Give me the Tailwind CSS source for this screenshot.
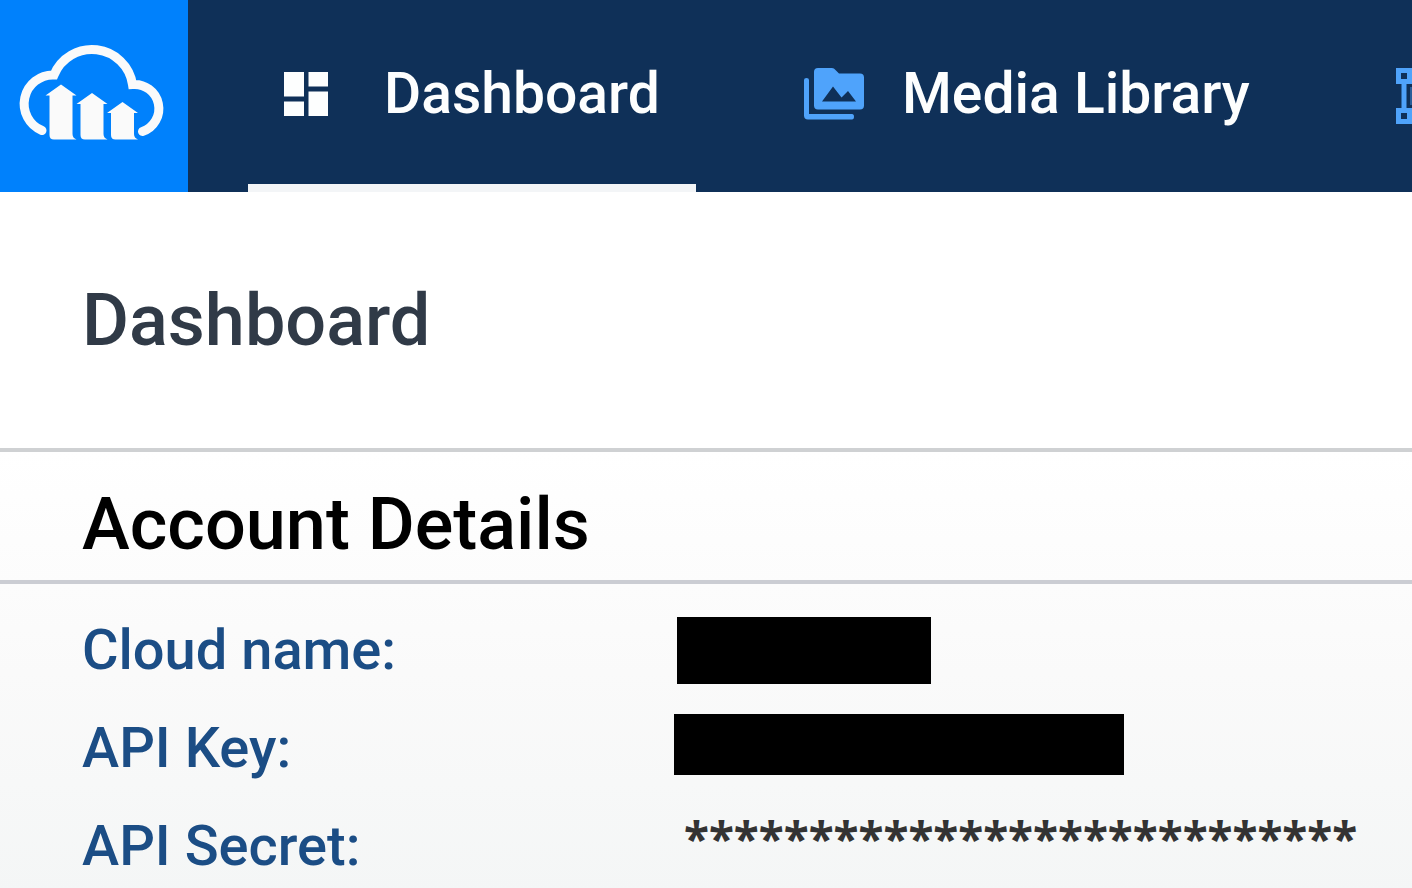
<!DOCTYPE html>
<html lang="en">
<head>
<meta charset="utf-8">
<title>Dashboard</title>
<meta name="viewport" content="width=device-width, initial-scale=1">
<script src="https://cdn.jsdelivr.net/npm/@tailwindcss/browser@4"></script>
</head>
<body class="flex min-h-screen flex-col overflow-x-hidden bg-white font-['Roboto',sans-serif] font-medium">
<header class="flex h-48 overflow-hidden bg-[#0f3058]">
  <a href="#" aria-label="Home" class="block w-[188px] shrink-0 bg-[#0081fc]">
    <svg class="h-48 w-[188px]" viewBox="0 0 188 192" fill="none">
      <path d="M42 130.500A28.850 28.850 0 0 1 54 75A41 41 0 0 1 132.500 84.500A24.200 24.200 0 0 1 142.500 131.500" stroke="#fafafa" stroke-width="9" stroke-linecap="round"/>
      <path d="M132.500 80V88.500" stroke="#fafafa" stroke-width="7"/>
      <g fill="#fafafa">
        <path d="M61 84.500L76.500 95.500H72.500V134Q72.500 138 76.500 139.500H54Q49.500 139.500 49.500 135V95.500H45.500Z"/>
        <path d="M92 93L107.500 104H103.500V134Q103.500 138 107.500 139.500H85Q80.500 139.500 80.500 135V104H76.500Z"/>
        <path d="M122.500 102L138 113H134V134Q134 138 138 139.500H115.500Q111 139.500 111 135V113H107Z"/>
      </g>
    </svg>
  </a>
  <nav class="ml-15 flex shrink-0 gap-18 text-[57px] leading-none text-[#fdfefe]">
    <a href="#" aria-current="page" class="flex w-[448px] shrink-0 items-center border-b-8 border-[#f3f5f7] pt-1 pl-9 whitespace-nowrap">
      <svg class="mr-14 h-11 w-11 shrink-0" viewBox="0 0 44 44" fill="currentColor"><path d="M0 0H20V24.500H0ZM24.500 0H44V14.500H24.500ZM0 29.500H20V44H0ZM24.500 19.500H44V44H24.500Z"/></svg>
      <span class="pb-0.5">Dashboard</span>
    </a>
    <a href="#" class="flex w-[520px] shrink-0 items-center pb-1 pl-9 whitespace-nowrap">
      <svg class="mr-[38px] h-[52px] w-[60px] shrink-0" viewBox="0 0 60 52" fill="#4fa3fb"><path d="M0 12Q0 10 2.500 10T5 12V46H48Q50 46 50 48.750T48 51.500H4Q0 51.500 0 47.500Z"/><path fill-rule="evenodd" d="M14 0H28Q30 0 31.500 2L35 5.500H56Q60 5.500 60 9.500V37.500Q60 41.500 56 41.500H14Q10 41.500 10 37.500V4Q10 0 14 0ZM18 33.500H52L44 23L37.500 29.500L29 18.500Z"/></svg>
      <span class="pb-0.5">Media Library</span>
    </a>
    <a href="#" aria-label="Transformations" class="flex shrink-0 items-center pl-9">
      <svg class="h-14 w-14" viewBox="0 0 56 56" fill="none" stroke="#4fa3fb"><path stroke-width="5" d="M2.500 2.500H13.500V13.500H2.500ZM42.500 2.500H53.500V13.500H42.500ZM2.500 42.500H13.500V53.500H2.500ZM42.500 42.500H53.500V53.500H42.500ZM8 16V40M48 16V40M16 8H40M16 48H40"/><path fill="#4fa3fb" fill-opacity=".4" stroke="none" d="M14 19H42V37H14Z"/></svg>
    </a>
  </nav>
</header>
<main class="flex grow flex-col">
  <div class="border-b-4 border-[#cfd1d3] pt-[87px] pb-[85px] pl-[82px]">
    <h1 class="text-[72px] leading-[84px] text-[#303a47]">Dashboard</h1>
  </div>
  <section class="grow bg-linear-to-b from-white via-[#fafafa] to-[#f4f6f6]">
    <h2 class="border-b-4 border-[#cbcdd3] pt-[31px] pb-[13px] pl-[82px] text-[72px] leading-[84px] text-black">Account Details</h2>
    <dl class="grid auto-rows-[98px] grid-cols-[592px_1fr] items-center pt-[17px] pl-[82px] text-[56px] leading-none whitespace-nowrap text-[#1b4d85]">
      <dt>Cloud name:</dt>
      <dd class="pl-[3px]"><span role="img" aria-label="Hidden cloud name" class="block h-[67px] w-[254px] bg-black"></span></dd>
      <dt>API Key:</dt>
      <dd class="pb-2"><span role="img" aria-label="Hidden API key" class="block h-[61px] w-[450px] bg-black"></span></dd>
      <dt>API Secret:</dt>
      <dd class="pb-4 pl-[10px] font-['Noto_Sans',sans-serif] text-[46px] font-bold text-[#333]">***************************</dd>
    </dl>
  </section>
</main>
</body>
</html>
